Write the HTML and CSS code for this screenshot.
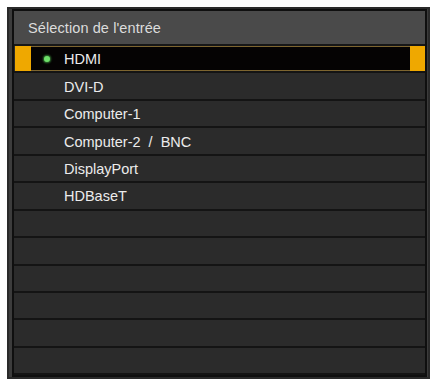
FILE: index.html
```html
<!DOCTYPE html>
<html>
<head>
<meta charset="utf-8">
<link rel="stylesheet" href="styles.css">
</head>
<body>
<div class="frame">
  <div class="inner">
    <div class="header">Sélection de l'entrée</div>
    <div class="list">
      <div class="row selected">
        <div class="mark"></div>
        <div class="sel-body"><span class="dot"></span><span class="label">HDMI</span></div>
        <div class="mark mark-right"></div>
      </div>
      <div class="row"><span class="label">DVI-D</span></div>
      <div class="row"><span class="label">Computer-1</span></div>
      <div class="row"><span class="label">Computer-2 / BNC</span></div>
      <div class="row"><span class="label">DisplayPort</span></div>
      <div class="row"><span class="label">HDBaseT</span></div>
      <div class="row"></div>
      <div class="row"></div>
      <div class="row"></div>
      <div class="row"></div>
      <div class="row"></div>
      <div class="row"></div>
    </div>
  </div>
</div>
</body>
</html>
```

FILE: styles.css
```css
html, body {
  margin: 0;
  padding: 0;
  background: #ffffff;
  overflow: hidden;
}
body {
  font-family: "Liberation Sans", Arial, sans-serif;
}
.frame {
  margin: 7px 5px 0 7px;
  border: 2px solid #2a2a2a;
  padding: 0 1px 0 3px;
  background: #3c3c3c;
  box-sizing: border-box;
}
.inner {
  border: 2px solid #0f0f0f;
  background: #2b2b2b;
}
.header {
  height: 35px;
  box-sizing: border-box;
  background: #4a4a4a;
  border-bottom: 2px solid #171717;
  color: #dcdcdc;
  font-size: 14.5px;
  letter-spacing: 0.1px;
  padding-left: 14px;
  display: flex;
  align-items: center;
  padding-top: 1px;
}
.list {
  display: flex;
  flex-direction: column;
}
.row {
  height: 27.44px;
  box-sizing: border-box;
  border-bottom: 2px solid #141414;
  background: #2b2b2b;
  display: flex;
  align-items: center;
  padding-left: 50px;
  color: #ececec;
  font-size: 14.5px;
}
.label {
  display: block;
  line-height: 16px;
  padding-top: 1px;
  word-spacing: 4px;
}
.row.selected {
  padding-left: 0;
  align-items: stretch;
}
.mark {
  width: 16px;
  flex: none;
  background: #efa800;
  margin-left: 1px;
}
.mark-right {
  margin-left: 0;
  width: 15px;
}
.sel-body {
  flex: 1;
  background: #050303;
  box-shadow: inset 0 1px 0 #7d6530, inset 0 -1px 0 #7d6530;
  display: flex;
  align-items: center;
  padding-left: 13px;
}
.dot {
  width: 6px;
  height: 6px;
  border-radius: 50%;
  background: #6ee06a;
  box-shadow: 0 0 2px 1px rgba(90, 220, 90, 0.55);
  margin-right: 14px;
  flex: none;
}
```
